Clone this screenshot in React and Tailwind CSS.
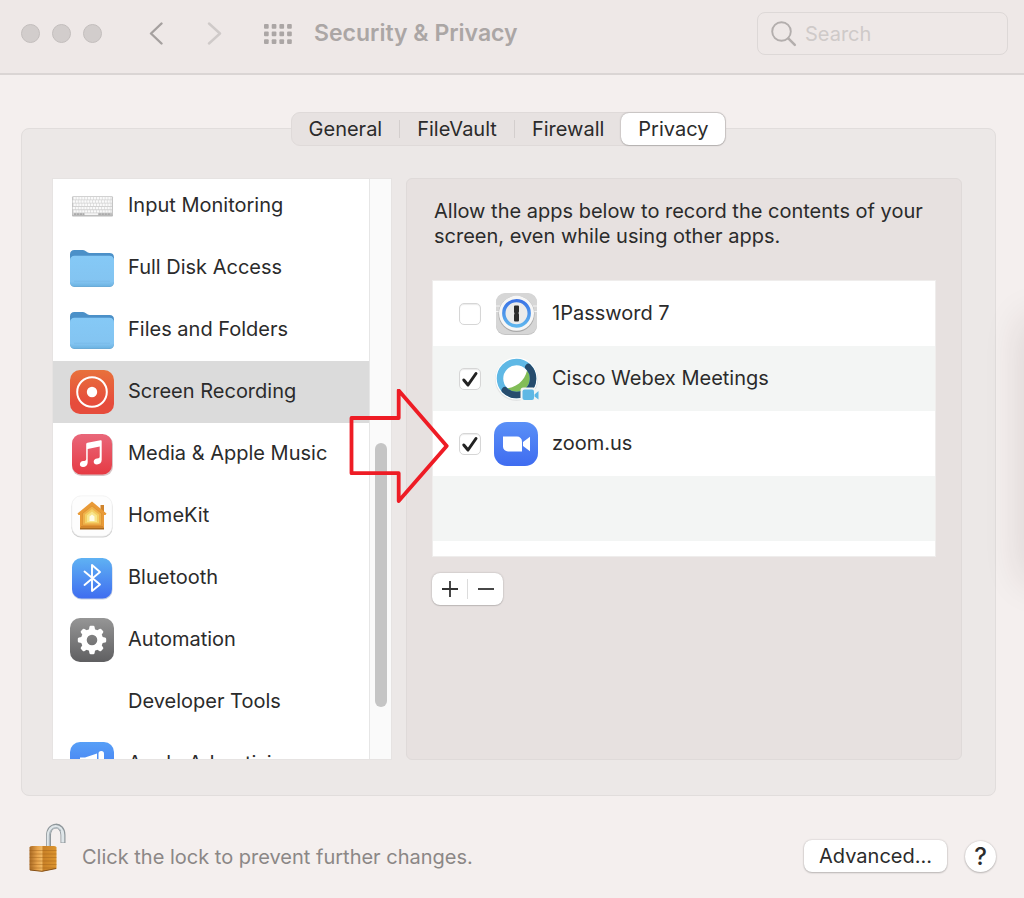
import React, { useState } from 'react';

const KEY_ROWS = [0, 1, 2, 3, 4];
const GEAR_TEETH = [0, 45, 90, 135, 180, 225, 270, 315];

const KeyboardIcon = () => (
  <svg viewBox="0 0 44 44" className="size-11" aria-hidden="true">
    <rect x="2" y="12.5" width="41" height="20" rx="1" fill="#b9b9b9" />
    <rect x="2.5" y="12" width="40" height="19" rx="1" fill="#d2d2d2" />
    {KEY_ROWS.map((row) => (
      <line
        key={row}
        x1={3.5 - (row % 2) * 0.8}
        x2="41.8"
        y1={14.2 + row * 3.3}
        y2={14.2 + row * 3.3}
        stroke="#fafafa"
        strokeWidth="2.4"
        strokeDasharray="2.3 0.6"
      />
    ))}
    <path d="M4 30.2h10M28.5 30.2h13" stroke="#aaa" strokeWidth="1.8" strokeDasharray="2.4 .6" />
    <path d="M15 30.2h13" stroke="#f5f5f5" strokeWidth="1.8" />
  </svg>
);

const FolderIcon = () => (
  <svg viewBox="0 0 44 44" className="size-11" aria-hidden="true">
    <defs>
      <linearGradient id="folder" x1="0" y1="0" x2="0" y2="1">
        <stop offset="0" stopColor="#85c9f6" />
        <stop offset=".85" stopColor="#83c4f1" />
        <stop offset="1" stopColor="#6cb3e2" />
      </linearGradient>
    </defs>
    <path d="M0 8.5Q0 4 4.500 4h8.500c2.500 0 4 3 6.500 3h20Q44 7 44 11.500V20H0z" fill="#4b90c8" />
    <rect y="10" width="44" height="31" rx="4.500" fill="#6ba9d4" />
    <rect y="9.800" width="44" height="30.400" rx="4.500" fill="url(#folder)" />
    <path d="M4 35.200h36" stroke="#74b8e5" strokeWidth=".7" />
  </svg>
);

const RecordIcon = () => (
  <svg viewBox="0 0 44 44" className="size-11" aria-hidden="true">
    <defs>
      <linearGradient id="record" x1="0" y1="0" x2="0" y2="1">
        <stop offset="0" stopColor="#e8713b" />
        <stop offset=".75" stopColor="#e64c3c" />
      </linearGradient>
    </defs>
    <rect width="44" height="44" rx="10" fill="url(#record)" />
    <circle cx="22" cy="22" r="14.800" fill="none" stroke="#fff" strokeWidth="2" />
    <circle cx="22" cy="22" r="5.200" fill="#fff" />
  </svg>
);

const MusicIcon = () => (
  <svg viewBox="0 0 44 44" className="size-11" aria-hidden="true">
    <defs>
      <linearGradient id="music" x1="0" y1="0" x2="0" y2="1">
        <stop offset="0" stopColor="#e9677a" />
        <stop offset="1" stopColor="#e63a43" />
      </linearGradient>
    </defs>
    <rect x="2" y="3" width="41" height="41" rx="9.500" fill="#d8c4c6" />
    <rect x="2" y="2" width="40" height="40.500" rx="9.500" fill="url(#music)" />
    <path
      d="M16.200 12.400c0-.9.500-1.400 1.300-1.600l13-2.500c.7-.1 1.200.3 1.200 1V27.800c0 3-2 4.500-4.700 4.600-2 .1-3.300-1-3.300-2.700 0-2 1.500-2.900 3.300-3.200 2-.3 2.700-.6 2.700-2V14.600l-12 2.400v13.300c0 3-2 4.700-4.600 4.800-2 .1-3.200-1-3.200-2.800 0-2 1.400-2.900 3.200-3.200 2.200-.4 3.100-.6 3.100-2.200z"
      fill="#fff"
    />
  </svg>
);

const HomeIcon = () => (
  <svg viewBox="0 0 44 44" className="size-11" aria-hidden="true">
    <rect x="1.500" y="3" width="41" height="40.500" rx="9.500" fill="#cfcfcf" />
    <rect x="1.800" y="1.800" width="40.400" height="40.400" rx="9.500" fill="#fdfdfd" stroke="#ececec" strokeWidth=".6" />
    <path d="M10 34V20L22 9l12 11v15.500H10z" fill="#a8691f" />
    <path d="M30.500 11h3.500v8h-3.500z" fill="#cf832b" />
    <path d="M7.500 19.500 22 7.500l14.500 12-1 1.500H34v12.700H10V21H8.500z" fill="#e99a37" />
    <path d="M12.500 19.500 22 12l9.500 7.500v11.700h-19z" fill="#efb14b" stroke="#d58b2c" strokeWidth=".6" />
    <path d="M15 20.500 22 15l7 5.500v8.700H15z" fill="#f4cf63" />
    <path d="M17 21.500 22 17.500l5 4v6.500H17z" fill="#f8e58d" />
    <path d="M19.500 22.500 22 20.500l2.500 2v4.500h-5z" fill="#fffce6" />
    <path d="M11 32.800h22" stroke="#c97c28" />
  </svg>
);

const BluetoothIcon = () => (
  <svg viewBox="0 0 44 44" className="size-11" aria-hidden="true">
    <defs>
      <linearGradient id="bluetooth" x1="0" y1="0" x2="0" y2="1">
        <stop offset="0" stopColor="#5fb2f3" />
        <stop offset="1" stopColor="#3f6df0" />
      </linearGradient>
    </defs>
    <rect x="2" y="3" width="40.500" height="40.500" rx="9.500" fill="#c3cde2" />
    <rect x="2" y="2" width="40" height="40.500" rx="9.500" fill="url(#bluetooth)" />
    <path
      d="M14.500 15.500 30 28.500 22 35V9l8 7-15.500 13"
      fill="none"
      stroke="#fff"
      strokeWidth="1.900"
      strokeLinecap="round"
      strokeLinejoin="round"
    />
  </svg>
);

const GearIcon = () => (
  <svg viewBox="0 0 44 44" className="size-11" aria-hidden="true">
    <defs>
      <linearGradient id="gear" x1="0" y1="0" x2="0" y2="1">
        <stop offset="0" stopColor="#969696" />
        <stop offset="1" stopColor="#5f5f61" />
      </linearGradient>
    </defs>
    <rect width="44" height="44" rx="10" fill="url(#gear)" />
    {GEAR_TEETH.map((angle) => (
      <path key={angle} d="M18.500 14l.9-5q.2-1.200 1.300-1.200h2.600q1.100 0 1.300 1.200l.9 5z" fill="#fff" transform={`rotate(${angle} 22 22)`} />
    ))}
    <circle cx="22" cy="22" r="8.200" fill="none" stroke="#fff" strokeWidth="5.800" />
  </svg>
);

const MegaphoneIcon = () => (
  <svg viewBox="0 0 44 44" className="size-11" aria-hidden="true">
    <defs>
      <linearGradient id="megaphone" x1="0" y1="0" x2="0" y2="1">
        <stop offset="0" stopColor="#579ff7" />
        <stop offset="1" stopColor="#3d6ff0" />
      </linearGradient>
    </defs>
    <rect width="44" height="44" rx="10" fill="url(#megaphone)" />
    <path d="M27 11.500v19L15 26.500H10V15.500h5z" fill="#fff" />
    <rect x="28.500" y="9" width="5.500" height="24" rx="2.700" fill="#fff" />
  </svg>
);

const OnePasswordIcon = () => (
  <svg viewBox="0 0 44 44" className="size-11" aria-hidden="true">
    <defs>
      <linearGradient id="onepassword" x1="0" y1="0" x2="0" y2="1">
        <stop offset="0" stopColor="#3b74e6" />
        <stop offset="1" stopColor="#5fb5ee" />
      </linearGradient>
    </defs>
    <rect x="2" y="1.500" width="41" height="41.500" rx="9" fill="#c4c4c4" />
    <rect x="2" y="1" width="41" height="41" rx="9" fill="#d6d6d6" />
    <path d="M2 14h4M2 19.500h4M39 14h4M39 19.500h4" stroke="#f3f3f3" />
    <circle cx="22.500" cy="22" r="18" fill="#aaa" />
    <circle cx="22.500" cy="21.300" r="17.500" fill="#f6f6f6" />
    <circle cx="22.500" cy="21.300" r="12.700" fill="#ebebeb" stroke="url(#onepassword)" strokeWidth="3.400" />
    <path d="M20 14.500q0-1 1-1h3q1 0 1 1v5l-.5 1.500.5 1.500v6q0 1-1 1h-3q-1 0-1-1V23l.5-1.500-.5-1.500z" fill="#2c2c2c" />
  </svg>
);

const WebexIcon = () => (
  <svg viewBox="-1 0 44 44" className="size-11 overflow-visible" aria-hidden="true">
    <circle cx="21.500" cy="22.500" r="21.500" fill="#e2e4e4" />
    <circle cx="21.500" cy="21.500" r="21" fill="#fff" />
    <circle cx="21.500" cy="21.500" r="14" fill="#82bd57" />
    <path d="M32.500 10C32 21 23 31 10 31.500A14 14 0 0 1 9 15 14 14 0 0 1 32.500 10z" fill="#fff" />
    <circle cx="21.500" cy="21.500" r="16.500" fill="none" stroke="#5fb8e5" strokeWidth="6.500" />
    <path d="M33.300 10A16.500 16.500 0 0 1 9.800 33.200" fill="none" stroke="#264c6d" strokeWidth="6.500" strokeLinecap="round" />
    <path d="M25.500 33.500q0-3 3-3h9.500q2 0 2.500 2l4-2v14h-4q-1 1-3 1h-9q-3 0-3-3z" fill="#f3f5f4" />
    <rect x="27.500" y="32.500" width="11.500" height="10.500" rx="2" fill="#5fb8e5" />
    <path d="M39.500 37.500l4-3.500v8.500l-4-3z" fill="#5fb8e5" />
  </svg>
);

const ZoomIcon = () => (
  <svg viewBox="0 0 44 44" className="size-11" aria-hidden="true">
    <defs>
      <linearGradient id="zoom" x1="0" y1="0" x2="0" y2="1">
        <stop offset="0" stopColor="#5a90f7" />
        <stop offset="1" stopColor="#3f6cf0" />
      </linearGradient>
    </defs>
    <rect width="44" height="44" rx="13" fill="url(#zoom)" />
    <path d="M9 14.500h14a5 5 0 0 1 5 5V29.500H14a5 5 0 0 1-5-5z" fill="#fff" />
    <path d="M29 20l7-5.200v14.400L29 24z" fill="#fff" />
  </svg>
);

const LockIcon = () => (
  <svg viewBox="0 0 40 50" className="h-[50px] w-10 shrink-0" aria-hidden="true">
    <defs>
      <linearGradient id="brass" x1="0" y1="0" x2="1" y2="0">
        <stop offset="0" stopColor="#a96a24" />
        <stop offset=".3" stopColor="#e8a44c" />
        <stop offset=".46" stopColor="#f0b862" />
        <stop offset=".5" stopColor="#c98127" />
        <stop offset="1" stopColor="#dc952f" />
      </linearGradient>
    </defs>
    <path d="M20.500 26V14c0-13 14.500-13 14.500-1v8" fill="none" stroke="#8f979b" strokeWidth="5" />
    <path d="M20.300 26V14c0-12.600 14.500-12.600 14.500-1v7.600" fill="none" stroke="#dfe6e9" strokeWidth="3" />
    <path d="M21.300 25V14c0-9 9-11 11.500-5" fill="none" stroke="#a5b0b6" strokeWidth="1" />
    <path d="M1.500 25.500Q1.500 24 4 24h22q2.500 0 2.500 1.500V46.500L14 49.500 1.500 48z" fill="url(#brass)" />
    <path
      d="M1.500 28.500h27M1.500 32h27M1.500 35.500h27M1.500 39h27M1.500 42.500h27M2 46h26"
      stroke="#9c5c16"
      strokeOpacity=".4"
      strokeWidth="1"
    />
    <path d="M2 48l12 1.300 14.200-2.800" fill="none" stroke="#865016" strokeWidth="1" />
  </svg>
);

const CATEGORIES = [
  { name: 'Input Monitoring', icon: <KeyboardIcon /> },
  { name: 'Full Disk Access', icon: <FolderIcon /> },
  { name: 'Files and Folders', icon: <FolderIcon /> },
  { name: 'Screen Recording', icon: <RecordIcon /> },
  { name: 'Media & Apple Music', icon: <MusicIcon /> },
  { name: 'HomeKit', icon: <HomeIcon /> },
  { name: 'Bluetooth', icon: <BluetoothIcon /> },
  { name: 'Automation', icon: <GearIcon /> },
  { name: 'Developer Tools', icon: null },
  { name: 'Apple Advertising', icon: <MegaphoneIcon /> },
];

const APPS = [
  { name: '1Password 7', icon: <OnePasswordIcon />, allowed: false },
  { name: 'Cisco Webex Meetings', icon: <WebexIcon />, allowed: true },
  { name: 'zoom.us', icon: <ZoomIcon />, allowed: true },
];

const TABS = ['General', 'FileVault', 'Firewall', 'Privacy'];

const TitleBar = () => (
  <header className="flex h-[75px] shrink-0 items-center border-b-2 border-[#dad5d4] bg-[#eee8e7] pr-4 pb-[6px] pl-[21px]">
    <div className="flex gap-3">
      <span className="size-[19px] rounded-full border border-[#c3bebd] bg-[#d2cdcc]" />
      <span className="size-[19px] rounded-full border border-[#c3bebd] bg-[#d2cdcc]" />
      <span className="size-[19px] rounded-full border border-[#c3bebd] bg-[#d2cdcc]" />
    </div>
    <button type="button" aria-label="Back" className="ml-11">
      <svg viewBox="0 0 20 24" className="h-6 w-5">
        <path d="M15.500 1.500 5 11.500l10.500 10" fill="none" stroke="#a5a09f" strokeWidth="2.400" strokeLinecap="round" strokeLinejoin="round" />
      </svg>
    </button>
    <button type="button" aria-label="Forward" className="ml-9">
      <svg viewBox="0 0 20 24" className="h-6 w-5">
        <path d="M7 1.500l11 10-11 10" fill="none" stroke="#cfcac9" strokeWidth="2.400" strokeLinecap="round" strokeLinejoin="round" />
      </svg>
    </button>
    <button type="button" aria-label="Show All" className="ml-[42px]">
      <svg viewBox="0 0 28 20" className="h-5 w-7" fill="#aba6a5">
        {[0, 7.7, 15.4, 23.1].map((x) =>
          [0, 7.6, 15.2].map((y) => <rect key={`${x}-${y}`} x={x} y={y} width="4.700" height="4.700" rx="1" />)
        )}
      </svg>
    </button>
    <h1 className="ml-[22px] text-[23px] font-semibold whitespace-nowrap text-[#aba6a5]">Security &amp; Privacy</h1>
    <label className="ml-auto flex h-[43px] w-[251px] items-center gap-[7px] rounded-lg border border-[#ddd8d7] px-3">
      <svg viewBox="0 0 28 28" className="size-7 shrink-0" fill="none" stroke="#b3aead" strokeLinecap="round">
        <circle cx="11.500" cy="11.500" r="9.300" strokeWidth="1.900" />
        <path d="M18.300 18.300l6.500 6.500" strokeWidth="2.500" />
      </svg>
      <input
        type="search"
        aria-label="Search"
        placeholder="Search"
        className="min-w-0 flex-1 bg-transparent text-xl outline-none placeholder:text-[#cfcac9]"
      />
    </label>
  </header>
);

const Tabs = ({ active, onSelect }) => (
  <div
    role="tablist"
    className="relative z-10 -mb-[18px] flex h-[34px] items-center self-center rounded-[9px] border border-[#dfdad9] bg-[#e7e2e1]"
  >
    {TABS.map((tab, i) => (
      <React.Fragment key={tab}>
        {i > 0 && tab !== active && <span className="h-[18px] w-px bg-[#d3cecd]" />}
        <button
          type="button"
          role="tab"
          aria-selected={tab === active}
          onClick={() => onSelect(tab)}
          className={`h-8 rounded-lg px-[17px] ${tab === active ? 'bg-white shadow-[0_0_2px_rgba(0,0,0,0.35),0_1px_1px_rgba(0,0,0,0.1)]' : ''}`}
        >
          {tab}
        </button>
      </React.Fragment>
    ))}
  </div>
);

const CategoryList = ({ active, onSelect }) => (
  <div className="flex w-[340px] shrink-0 overflow-hidden border border-[#e6e3e2] bg-white">
    <ul className="-mt-1 flex-1">
      {CATEGORIES.map(({ name, icon }) => (
        <li key={name}>
          <button
            type="button"
            onClick={() => onSelect(name)}
            className={`flex h-[62px] w-full items-center gap-[14px] pl-[17px] text-left ${name === active ? 'bg-[#dbdbdb]' : ''}`}
          >
            <span className="size-11 shrink-0">{icon}</span>
            <span className="pb-[3px] whitespace-nowrap">{name}</span>
          </button>
        </li>
      ))}
    </ul>
    <div className="w-[22px] border-l border-[#e6e6e6] bg-[#fafafa] px-[5px] pt-[264px]">
      <div className="h-[264px] w-3 rounded-full bg-[#c5c5c5]" />
    </div>
  </div>
);

const AppRow = ({ app, onToggle }) => (
  <label className="flex h-full items-center pl-[26px]">
    <span className="relative size-[22px]">
      <input
        type="checkbox"
        checked={app.allowed}
        onChange={onToggle}
        className="peer block size-[22px] appearance-none rounded-[5px] border border-[#d6d6d6] bg-white shadow-[inset_0_1px_1px_rgba(0,0,0,0.08)]"
      />
      <svg viewBox="0 0 22 22" className="pointer-events-none absolute inset-0 hidden size-[22px] peer-checked:block">
        <path d="M4.800 12l4.200 5L17 5.500" fill="none" stroke="#222" strokeWidth="3" strokeLinecap="round" strokeLinejoin="round" />
      </svg>
    </span>
    <span className="ml-[13px] size-11">{app.icon}</span>
    <span className="ml-[14px] pb-0.5">{app.name}</span>
  </label>
);

const RecordingPanel = () => {
  const [apps, setApps] = useState(APPS);

  const toggle = (name) => {
    setApps(apps.map((app) => (app.name === name ? { ...app, allowed: !app.allowed } : app)));
  };

  return (
    <section className="min-w-0 flex-1 rounded-md border border-[#dfdad9] bg-[#e7e1e0] px-[25px] pt-5">
      <p className="px-0.5 leading-[25px]">
        Allow the apps below to record the contents of your screen, even while using other apps.
      </p>
      <ul className="mt-[31px] border border-[#efedec] bg-white pb-[15px]">
        {apps.map((app) => (
          <li key={app.name} className="h-[65px] even:bg-[#f3f5f4]">
            <AppRow app={app} onToggle={() => toggle(app.name)} />
          </li>
        ))}
        <li className="h-[65px] even:bg-[#f3f5f4]" />
      </ul>
      <div className="mt-4 inline-flex h-8 items-center rounded-lg bg-white shadow-[0_0_2px_rgba(0,0,0,0.25),0_1px_1px_rgba(0,0,0,0.12)]">
        <button type="button" aria-label="Add" className="flex h-8 w-[35px] items-center justify-center">
          <svg viewBox="0 0 16 16" className="size-4" stroke="#333" strokeWidth="1.800">
            <path d="M8 0v16M0 8h16" />
          </svg>
        </button>
        <span className="h-5 w-px bg-[#dcdcdc]" />
        <button type="button" aria-label="Remove" className="flex h-8 w-[35px] items-center justify-center">
          <svg viewBox="0 0 16 16" className="size-4" stroke="#333" strokeWidth="1.800">
            <path d="M0 8h16" />
          </svg>
        </button>
      </div>
    </section>
  );
};

const Footer = () => (
  <footer className="flex h-[102px] shrink-0 items-center px-7">
    <LockIcon />
    <p className="ml-[14px] pt-5 text-[#8b8786]">Click the lock to prevent further changes.</p>
    <div className="ml-auto flex items-center gap-[18px] pt-[18px]">
      <button
        type="button"
        className="h-8 rounded-lg bg-white px-[15px] shadow-[0_0_2px_rgba(0,0,0,0.2),0_1px_2px_rgba(0,0,0,0.2)]"
      >
        Advanced...
      </button>
      <button
        type="button"
        aria-label="Help"
        className="size-[31px] rounded-full bg-white text-2xl leading-[31px] font-medium shadow-[0_0_2px_rgba(0,0,0,0.2),0_1px_2px_rgba(0,0,0,0.2)]"
      >
        ?
      </button>
    </div>
  </footer>
);

export default function App() {
  const [tab, setTab] = useState('Privacy');
  const [category, setCategory] = useState('Screen Recording');

  return (
    <div className="relative flex h-screen min-h-[640px] flex-col overflow-hidden bg-[#f4efee] font-[Inter,sans-serif] text-xl text-[#2b2b2b]">
      <TitleBar />
      <main className="flex min-h-0 flex-1 flex-col pt-[37px] pr-7 pl-[21px]">
        <Tabs active={tab} onSelect={setTab} />
        <div className="relative flex min-h-0 flex-1 gap-[14px] rounded-lg border border-[#e1dddc] bg-[#ece8e7] pt-[49px] pr-[33px] pb-[35px] pl-[30px]">
          <CategoryList active={category} onSelect={setCategory} />
          <RecordingPanel />
          <svg viewBox="0 0 100 114" className="pointer-events-none absolute top-[260px] left-[327px] h-[114px] w-[100px]" aria-hidden="true">
            <path
              d="M2.500 29H49.700V1.500L97.700 57 49.700 112V84.200H2.500z"
              fill="none"
              stroke="#ee1c25"
              strokeWidth="3.800"
              strokeLinejoin="round"
            />
          </svg>
        </div>
      </main>
      <Footer />
      {/* soft shadow falling in from the right edge */}
      <div className="pointer-events-none absolute top-[320px] left-full h-[260px] w-10 shadow-[0_0_40px_rgba(60,30,30,0.14)]" />
    </div>
  );
}
